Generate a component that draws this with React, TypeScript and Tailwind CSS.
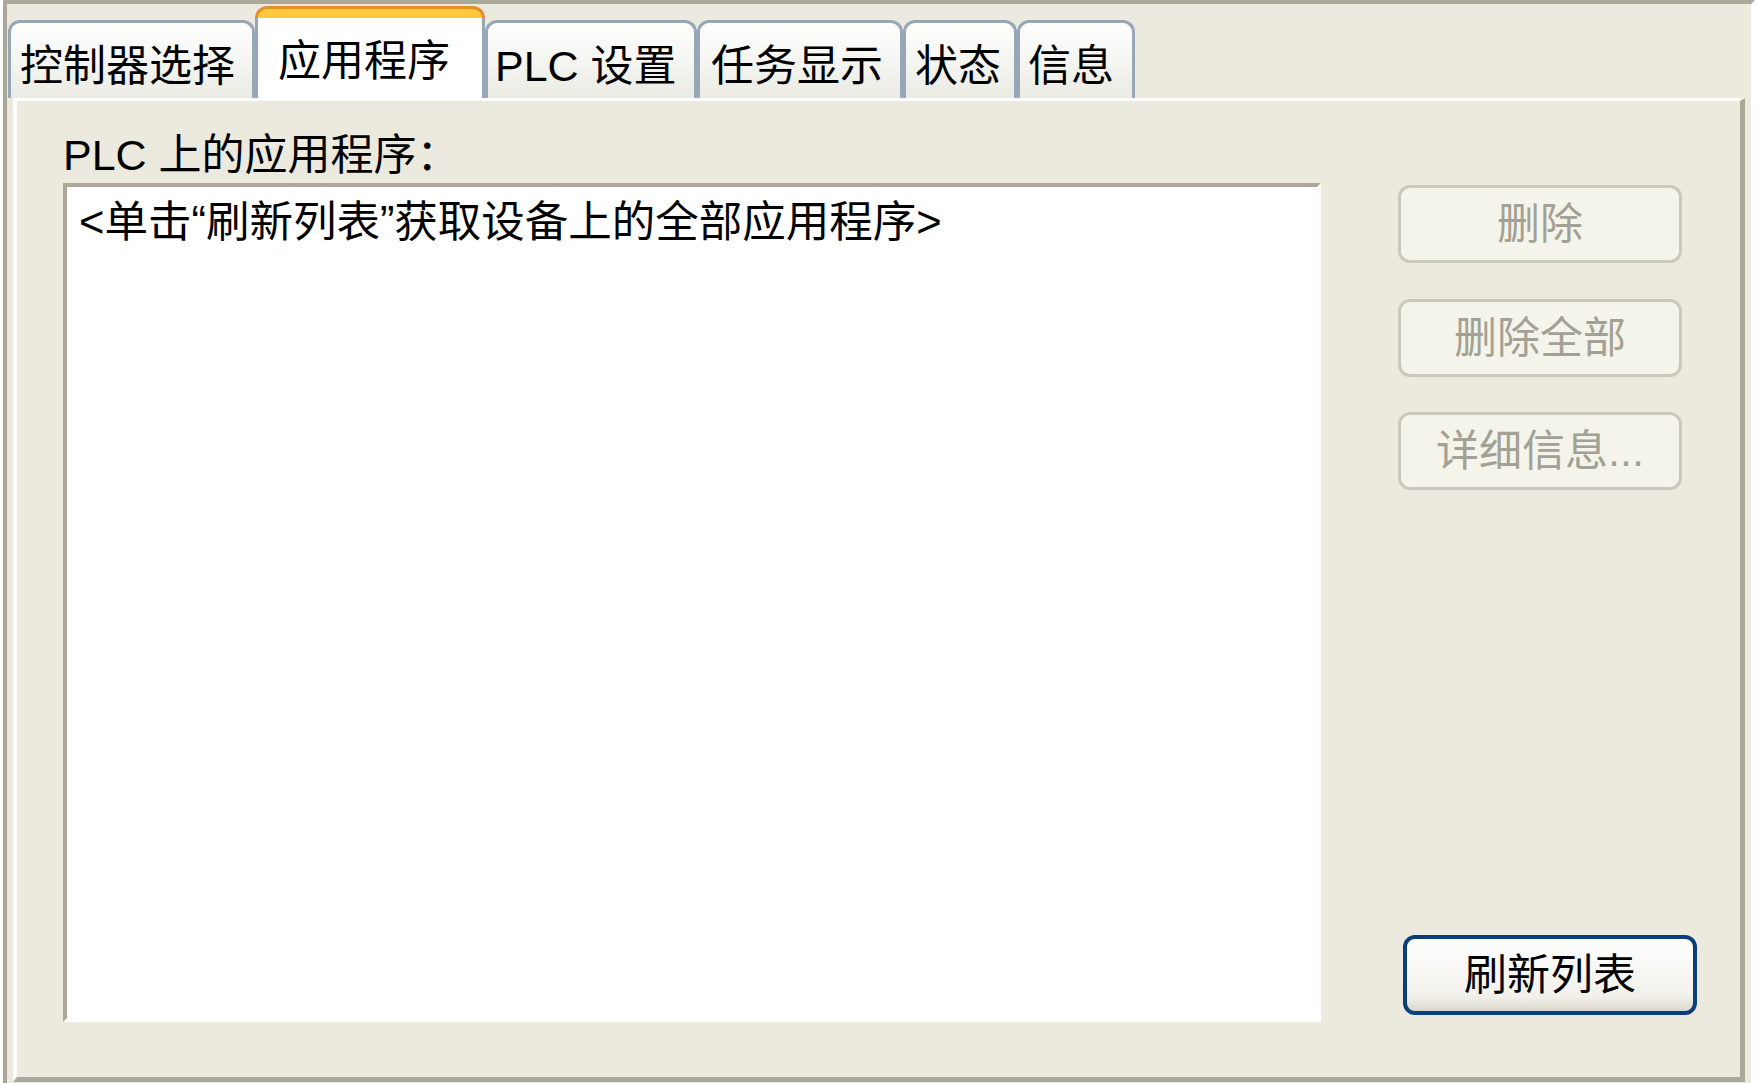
import React from 'react';

const font = { fontFamily: '"Liberation Sans", "Noto Sans CJK SC", sans-serif' };

const tabs = [
  { label: '控制器选择', cls: 'w-[247px] pl-[9px]', active: false },
  { label: '应用程序', cls: 'w-[230px] pl-[20px]', active: true },
  { label: 'PLC 设置', cls: 'w-[212px] pl-[7px]', active: false },
  { label: '任务显示', cls: 'w-[206px] pl-[11px]', active: false },
  { label: '状态', cls: 'w-[114px] pl-[9px]', active: false },
  { label: '信息', cls: 'w-[118px] pl-[8px]', active: false },
];

function Tab({ label, cls, active }: { label: string; cls: string; active: boolean }) {
  if (active) {
    return (
      <div className={`flex h-[92px] flex-col ${cls.split(' ')[0]}`}>
        <div className="h-[12px] rounded-t-[12px] border-x-[3px] border-t-[3px] border-[#e58f2b] bg-[#fec93c]" />
        <div className="flex-1 border-x-[3px] border-[#97a7b7] bg-white pt-[18px] pl-[20px] text-[43px] leading-[50px] text-black">
          {label}
        </div>
      </div>
    );
  }
  return (
    <div
      className={`h-[78px] rounded-t-[12px] border-x-[3px] border-t-[3px] border-[#97a7b7] bg-linear-to-b from-white to-[#ebebe4] pt-[18px] text-[43px] leading-[50px] text-black ${cls}`}
    >
      {label}
    </div>
  );
}

function GrayButton({ children }: { children: React.ReactNode }) {
  return (
    <div className="flex h-[78px] w-[284px] items-center justify-center rounded-[12px] border-[3px] border-[#cac7bb] bg-[#f5f4ea] text-[43px] leading-[50px] text-[#a3a195]">
      {children}
    </div>
  );
}

export default function App() {
  return (
    <div className="h-[1083px] w-[1758px] overflow-hidden bg-white" style={font}>
      <div className="ml-[3px] h-[1083px] w-[1752px] border-t-4 border-l-4 border-r-4 border-t-[#aca899] border-l-[#aca899] border-r-white bg-[#ece9df]">
        {/* tab strip */}
        <div className="flex h-[94px] items-end pl-[1px]">
          {tabs.map((t) => (
            <Tab key={t.label} {...t} />
          ))}
        </div>

        {/* tab page */}
        <div className="ml-[6px] h-[984px] w-[1732px] border-t-[3px] border-l-4 border-r-[5px] border-b-[5px] border-t-white border-l-white border-r-[#aca899] border-b-[#aca899]">
          <div className="flex flex-col pl-[46px] pt-[29px]">
            <div className="h-[50px] text-[43px] leading-[50px] text-black">PLC 上的应用程序：</div>
            <div className="mt-[3px] flex">
              <div className="h-[839px] w-[1258px] border-4 border-t-[#aca899] border-l-[#aca899] border-r-white border-b-white bg-white pl-[12px] pt-[10px] text-[43.5px] leading-[50px] text-black">
                &lt;单击“刷新列表”获取设备上的全部应用程序&gt;
              </div>
              <div className="ml-[77px] flex h-[832px] flex-col pt-[2px]">
                <GrayButton>删除</GrayButton>
                <div className="mt-[36px]">
                  <GrayButton>删除全部</GrayButton>
                </div>
                <div className="mt-[35px]">
                  <GrayButton>详细信息...</GrayButton>
                </div>
                <button className="mt-auto ml-[5px] flex h-[80px] w-[294px] items-center justify-center rounded-[12px] border-4 border-[#0a3f7c] bg-linear-to-b from-white via-[#f1f0ea] via-80% to-[#dbd7cb] text-[43px] leading-[50px] text-black">
                  刷新列表
                </button>
              </div>
            </div>
          </div>
        </div>
      </div>
    </div>
  );
}
